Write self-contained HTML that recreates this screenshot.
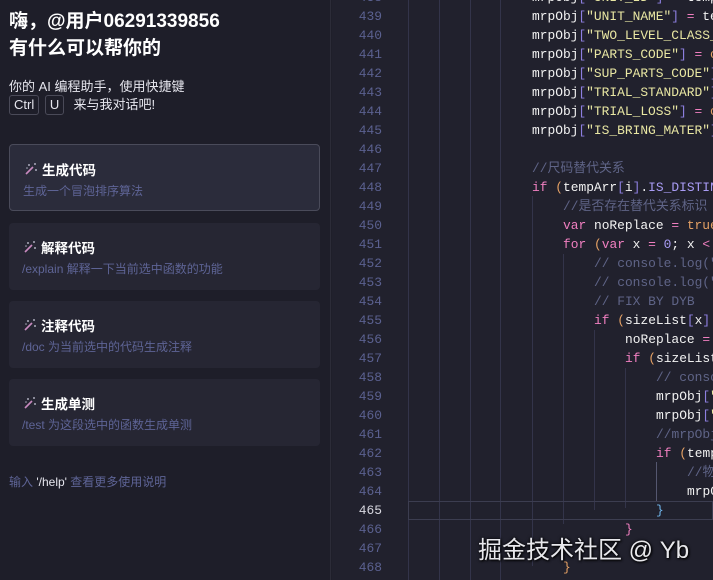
<!DOCTYPE html>
<html><head><meta charset="utf-8"><style>
*{margin:0;padding:0;box-sizing:border-box}
body{width:713px;height:580px;overflow:hidden;background:#1f1f2a;font-family:"Liberation Sans","Noto Sans CJK SC",sans-serif;position:relative}
#left{position:absolute;left:0;top:0;width:331px;height:580px;background:#1e1e29;border-right:1px solid #2c2c38}
h1{position:absolute;left:9px;color:#fff;font-size:19px;font-weight:bold;line-height:26px}
.t{position:absolute;color:#e6e6ee;font-size:13px}
.kbd{display:inline-block;border:1px solid #4a4a58;border-radius:3px;padding:0 4px;height:20px;line-height:18px;margin-right:2px}
.card{position:absolute;left:9px;width:311px;height:67px;background:#262633;border-radius:4px}
.card.sel{background:#2b2c3b;border:1px solid #4a4b5a}
.card b{position:absolute;left:32px;top:14px;color:#fff;font-size:13.5px}
.card span{position:absolute;left:13px;top:37px;color:#5e6496;font-size:12px;white-space:nowrap}
.card svg{position:absolute;left:14px;top:17px}
#ed{position:absolute;left:332px;top:0;width:381px;height:580px;background:#21212d}
.ln{position:absolute;left:0;width:50px;text-align:right;color:#5b6190;font-family:"Liberation Mono",monospace;font-size:12.9px;height:19px;line-height:19px}
.cl{position:absolute;left:200px;white-space:pre;color:#f2f2f2;font-family:"Liberation Mono","Noto Sans CJK SC",monospace;font-size:12.9px;height:19px;line-height:19px}
.g{position:absolute;width:1px;background:#33344a;top:0}
.k{color:#f07fc0}.s{color:#e9e7a3}.p{color:#8d7fe0}.o{color:#e4a064}.c{color:#5f6487}.m{color:#a99cf5}.e{color:#f07fc0}
</style></head><body>
<div id="left">
<h1 style="top:9px">嗨，@用户06291339856</h1>
<h1 style="top:36px">有什么可以帮你的</h1>
<div class="t" style="left:9px;top:76px">你的 AI 编程助手，使用快捷键</div>
<div class="t" style="left:9px;top:94px"><span class="kbd">Ctrl</span> <span class="kbd">U</span>&nbsp; 来与我对话吧!</div>
<div class="card sel" style="top:144px"><svg width="14" height="14" viewBox="0 0 14 14"><path d="M2 12L9 5" stroke="#c98ac0" stroke-width="1.6"/><circle cx="5" cy="3" r="1" fill="#aab"/><circle cx="11" cy="2" r="1" fill="#aab"/><circle cx="12" cy="8" r="1" fill="#aab"/><circle cx="3" cy="6" r=".8" fill="#aab"/></svg><b>生成代码</b><span>生成一个冒泡排序算法</span></div>
<div class="card" style="top:223px"><svg width="14" height="14" viewBox="0 0 14 14"><path d="M2 12L9 5" stroke="#c98ac0" stroke-width="1.6"/><circle cx="5" cy="3" r="1" fill="#aab"/><circle cx="11" cy="2" r="1" fill="#aab"/><circle cx="12" cy="8" r="1" fill="#aab"/><circle cx="3" cy="6" r=".8" fill="#aab"/></svg><b>解释代码</b><span>/explain 解释一下当前选中函数的功能</span></div>
<div class="card" style="top:301px"><svg width="14" height="14" viewBox="0 0 14 14"><path d="M2 12L9 5" stroke="#c98ac0" stroke-width="1.6"/><circle cx="5" cy="3" r="1" fill="#aab"/><circle cx="11" cy="2" r="1" fill="#aab"/><circle cx="12" cy="8" r="1" fill="#aab"/><circle cx="3" cy="6" r=".8" fill="#aab"/></svg><b>注释代码</b><span>/doc 为当前选中的代码生成注释</span></div>
<div class="card" style="top:379px"><svg width="14" height="14" viewBox="0 0 14 14"><path d="M2 12L9 5" stroke="#c98ac0" stroke-width="1.6"/><circle cx="5" cy="3" r="1" fill="#aab"/><circle cx="11" cy="2" r="1" fill="#aab"/><circle cx="12" cy="8" r="1" fill="#aab"/><circle cx="3" cy="6" r=".8" fill="#aab"/></svg><b>生成单测</b><span>/test 为这段选中的函数生成单测</span></div>
<div class="t" style="left:9px;top:473px;font-size:12px;color:#5e6496">输入 <span style="color:#e6e6ee">'/help'</span> 查看更多使用说明</div>
</div>
<div id="ed">
<div class="g" style="left:76px;height:580px"></div>
<div class="g" style="left:107px;height:580px"></div>
<div class="g" style="left:138px;height:580px"></div>
<div class="g" style="left:168px;height:580px"></div>
<div class="g" style="left:200px;top:196px;height:370px"></div>
<div class="g" style="left:231px;top:254px;height:270px"></div>
<div class="g" style="left:262px;top:330px;height:180px"></div>
<div class="g" style="left:293px;top:368px;height:140px"></div>
<div class="g" style="left:324px;top:462px;height:40px;background:#555770"></div>
<div style="position:absolute;left:76px;top:501px;width:305px;height:19px;border:1px solid #3c3d50"></div>
<div id="lines"></div>
<div style="position:absolute;left:146px;top:530px;font-size:24px;color:#e8e8ec;text-shadow:0 0 3px #000,1px 1px 2px #000;font-family:'Liberation Sans','Noto Sans CJK SC',sans-serif">掘金技术社区 @ Yb</div>
</div>
<script>
var L=[
[0,'mrpObj<span class="p">[</span><span class="s">"UNIT_ID"</span><span class="p">]</span> <span class="e">=</span> temp'],
[0,'mrpObj<span class="p">[</span><span class="s">"UNIT_NAME"</span><span class="p">]</span> <span class="e">=</span> te'],
[0,'mrpObj<span class="p">[</span><span class="s">"TWO_LEVEL_CLASS_</span>'],
[0,'mrpObj<span class="p">[</span><span class="s">"PARTS_CODE"</span><span class="p">]</span> <span class="e">=</span> <span class="o">c</span>'],
[0,'mrpObj<span class="p">[</span><span class="s">"SUP_PARTS_CODE"</span><span class="p">]</span>'],
[0,'mrpObj<span class="p">[</span><span class="s">"TRIAL_STANDARD"</span><span class="p">]</span>'],
[0,'mrpObj<span class="p">[</span><span class="s">"TRIAL_LOSS"</span><span class="p">]</span> <span class="e">=</span> <span class="o">c</span>'],
[0,'mrpObj<span class="p">[</span><span class="s">"IS_BRING_MATER"</span><span class="p">]</span>'],
[0,''],
[0,'<span class="c">//尺码替代关系</span>'],
[0,'<span class="k">if</span> <span class="o">(</span>tempArr<span class="p">[</span>i<span class="p">]</span>.<span class="m">IS_DISTIN</span>'],
[1,'<span class="c">//是否存在替代关系标识</span>'],
[1,'<span class="k">var</span> noReplace <span class="e">=</span> <span class="o">true</span>'],
[1,'<span class="k">for</span> <span class="o">(</span><span class="k">var</span> x <span class="e">=</span> <span class="m">0</span>; x <span class="e">&lt;</span>'],
[2,'<span class="c">// console.log("</span>'],
[2,'<span class="c">// console.log("</span>'],
[2,'<span class="c">// FIX BY DYB</span>'],
[2,'<span class="k">if</span> <span class="o">(</span>sizeList<span class="p">[</span>x<span class="p">]</span>.'],
[3,'noReplace <span class="e">=</span>'],
[3,'<span class="k">if</span> <span class="o">(</span>sizeList'],
[4,'<span class="c">// conso</span>'],
[4,'mrpObj<span class="p">[</span><span class="s">"</span>'],
[4,'mrpObj<span class="p">[</span><span class="s">"</span>'],
[4,'<span class="c">//mrpObj</span>'],
[4,'<span class="k">if</span> <span class="o">(</span>temp'],
[5,'<span class="c">//物</span>'],
[5,'mrpO'],
[4,'<span class="m" style="color:#6fb3e8">}</span>'],
[3,'<span class="p" style="color:#f07fc0">}</span>'],
[2,''],
[1,'<span class="o">}</span>']];
var h='';
for(var i=0;i<L.length;i++){var y=-12.5+i*19;var n=438+i;
h+='<div class="ln" style="top:'+y+'px;'+(n==465?'color:#d8d8e0':'')+'">'+n+'</div>';
h+='<div class="cl" style="top:'+y+'px;left:'+(200+L[i][0]*31)+'px">'+L[i][1]+'</div>';}
document.getElementById('lines').innerHTML=h;
</script>
</body></html>
